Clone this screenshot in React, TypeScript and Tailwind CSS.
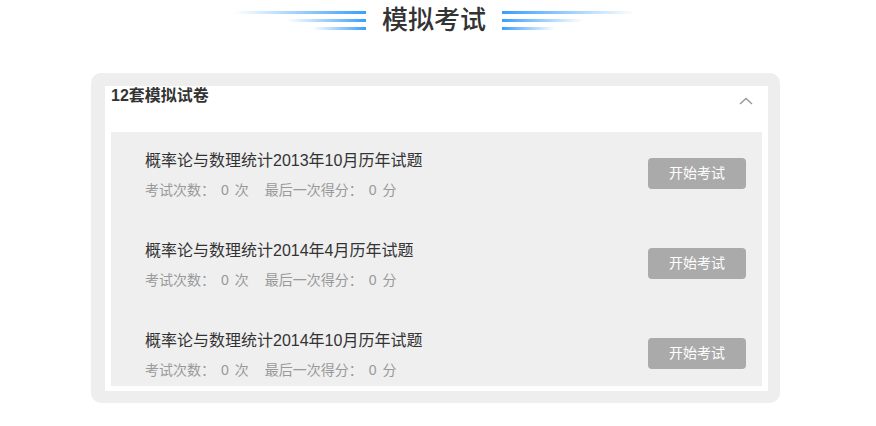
import React from 'react';

const papers = [
  { title: '概率论与数理统计2013年10月历年试题', times: 0, score: 0 },
  { title: '概率论与数理统计2014年4月历年试题', times: 0, score: 0 },
  { title: '概率论与数理统计2014年10月历年试题', times: 0, score: 0 },
];

const font = { fontFamily: '"Liberation Sans", "Noto Sans CJK SC", sans-serif' };

const Lines: React.FC<{ side: 'left' | 'right' }> = ({ side }) => {
  const widths = side === 'left' ? ['w-[132px]', 'w-[79px]', 'w-[54px]'] : ['w-[133px]', 'w-[81px]', 'w-[53px]'];
  return (
    <div className={`flex flex-col gap-[5px] w-[133px] ${side === 'left' ? 'items-end' : 'items-start'}`}>
      {widths.map((w) => (
        <div
          key={w}
          className={`h-[3px] ${w} ${
            side === 'left'
              ? 'bg-linear-to-r from-[#3a9ffb00] to-[#3a9ffb]'
              : 'bg-linear-to-l from-[#3a9ffb00] to-[#3a9ffb]'
          }`}
        />
      ))}
    </div>
  );
};

export default function App() {
  return (
    <div className="w-[876px] h-[426px] bg-white" style={font}>
      <div className="w-[689px] ml-[91px]">
        <div className="h-[40px] flex items-center justify-center gap-4 pr-[3px]">
          <Lines side="left" />
          <h2 className="text-[26px] leading-[40px] font-medium text-[#333]">模拟考试</h2>
          <Lines side="right" />
        </div>

        <div className="mt-[33px] bg-[#eeeeee] rounded-[10px] pt-[13px] pl-[14px] pr-[12px] pb-[12px]">
          <div className="bg-white pb-[5px]">
            <div className="h-[46px] flex justify-between items-start px-[6px]">
              <span className="text-[16px] leading-[20px] font-bold text-[#333]">12套模拟试卷</span>
              <svg width="14" height="8" viewBox="0 0 14 8" className="mt-[11px] mr-[9px]">
                <path d="M1 7 L7 1.5 L13 7" fill="none" stroke="#9a9a9a" strokeWidth="1.5" />
              </svg>
            </div>
            <div className="mx-[6px] bg-[#efefef] flex flex-col gap-4">
              {papers.map((p) => (
                <div key={p.title} className="h-[74px] pl-[34px] pr-[16px] flex justify-between items-start">
                  <div className="pt-[18px]">
                    <div className="text-[16px] leading-[22px] text-[#333]">{p.title}</div>
                    <div className="mt-[8px] text-[14px] leading-[20px] text-[#999] flex">
                      <span className="mr-[16px]">
                        考试次数：<span className="ml-[6px]">{p.times}</span>
                        <span className="ml-[6px]">次</span>
                      </span>
                      <span>
                        最后一次得分：<span className="ml-[6px]">{p.score}</span>
                        <span className="ml-[6px]">分</span>
                      </span>
                    </div>
                  </div>
                  <button className="mt-[26px] w-[98px] h-[31px] rounded-[4px] bg-[#aaaaaa] text-white text-[14px]">
                    开始考试
                  </button>
                </div>
              ))}
            </div>
          </div>
        </div>
      </div>
    </div>
  );
}
